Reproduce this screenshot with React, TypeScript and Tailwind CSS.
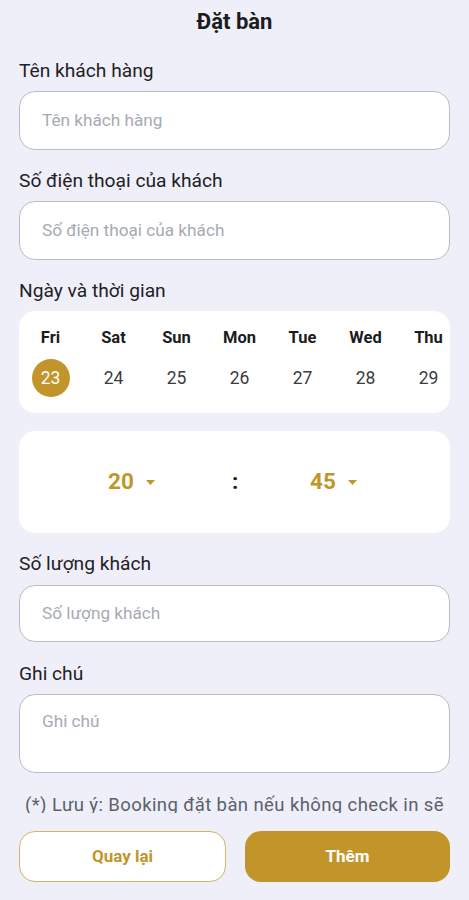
import React from "react";

const days = [
  { name: "Fri", date: 23 },
  { name: "Sat", date: 24 },
  { name: "Sun", date: 25 },
  { name: "Mon", date: 26 },
  { name: "Tue", date: 27 },
  { name: "Wed", date: 28 },
  { name: "Thu", date: 29 },
];

function Label({ children }: { children: React.ReactNode }) {
  return <div className="h-[20px] text-[19.2px] leading-[20px] text-[#1f2125]">{children}</div>;
}

function Field({ placeholder, className = "" }: { placeholder: string; className?: string }) {
  return (
    <div
      className={`flex items-center rounded-[16px] border border-[#b9bcc5] bg-white pl-[22px] text-[17.2px] text-[#a6aab5] ${className}`}
    >
      {placeholder}
    </div>
  );
}

function Caret() {
  return (
    <svg width="9" height="5" viewBox="0 0 9 5" className="ml-[12px]">
      <path d="M0 0h9L4.5 5z" fill="#c1952a" />
    </svg>
  );
}

export default function App() {
  const selected = 23;

  return (
    <div
      className="min-h-[900px] w-full bg-[#efeff9] px-[19px]"
      style={{ fontFamily: "Roboto, 'Noto Sans', sans-serif" }}
    >
      <div className="flex h-[42px] items-center justify-center text-[22px] font-bold text-[#1b1c20]">
        Đặt bàn
      </div>

      <div className="mt-[19px]">
        <Label>Tên khách hàng</Label>
        <Field placeholder="Tên khách hàng" className="mt-[10px] h-[59px]" />
      </div>

      <div className="mt-[21px]">
        <Label>Số điện thoại của khách</Label>
        <Field placeholder="Số điện thoại của khách" className="mt-[10px] h-[59px]" />
      </div>

      <div className="mt-[21px]">
        <Label>Ngày và thời gian</Label>
        <div className="mt-[10px] h-[102px] overflow-hidden rounded-[16px] bg-white">
          <div className="flex">
            {days.map((d) => (
              <div key={d.date} className="flex w-[63px] shrink-0 flex-col items-center">
                <div className="mt-[18px] h-[18px] text-[16.5px] leading-[18px] font-bold text-[#1b1c20]">
                  {d.name}
                </div>
                <div
                  className={`mt-[12px] flex h-[38px] w-[38px] items-center justify-center rounded-full text-[17.5px] ${
                    d.date === selected ? "bg-[#c1952a] text-white" : "text-[#3a3c42]"
                  }`}
                >
                  {d.date}
                </div>
              </div>
            ))}
          </div>
        </div>
      </div>

      <div className="mt-[18px] flex h-[102px] items-center rounded-[16px] bg-white pl-[89px] text-[22.5px] font-bold">
        <div className="flex w-[124px] items-center text-[#c1952a]">
          20
          <Caret />
        </div>
        <div className="w-[8px] text-[#1b1c20]">:</div>
        <div className="ml-[70px] flex items-center text-[#c1952a]">
          45
          <Caret />
        </div>
      </div>

      <div className="mt-[21px]">
        <Label>Số lượng khách</Label>
        <Field placeholder="Số lượng khách" className="mt-[11px] h-[57px]" />
      </div>

      <div className="mt-[22px]">
        <Label>Ghi chú</Label>
        <div className="mt-[10px] h-[79px] rounded-[16px] border border-[#b9bcc5] bg-white pl-[22px] pt-[16px] text-[17.2px] leading-[20px] text-[#a6aab5]">
          Ghi chú
        </div>
      </div>

      <div className="mt-[22px] h-[18px] overflow-hidden text-center text-[18.5px] leading-[20px] tracking-[0.4px] text-[#5a616c]">
        (*) Lưu ý: Booking đặt bàn nếu không check in sẽ
        <br />
        tự động hủy sau 15 phút
      </div>

      <div className="mt-[18px] flex gap-[19px]">
        <button className="flex h-[51px] flex-1 items-center justify-center rounded-[16px] border border-[#d2b36a] bg-white text-[17px] font-bold text-[#c1952a]">
          Quay lại
        </button>
        <button className="flex h-[51px] flex-1 items-center justify-center rounded-[16px] bg-[#c1952a] text-[17px] font-bold text-white">
          Thêm
        </button>
      </div>
    </div>
  );
}
